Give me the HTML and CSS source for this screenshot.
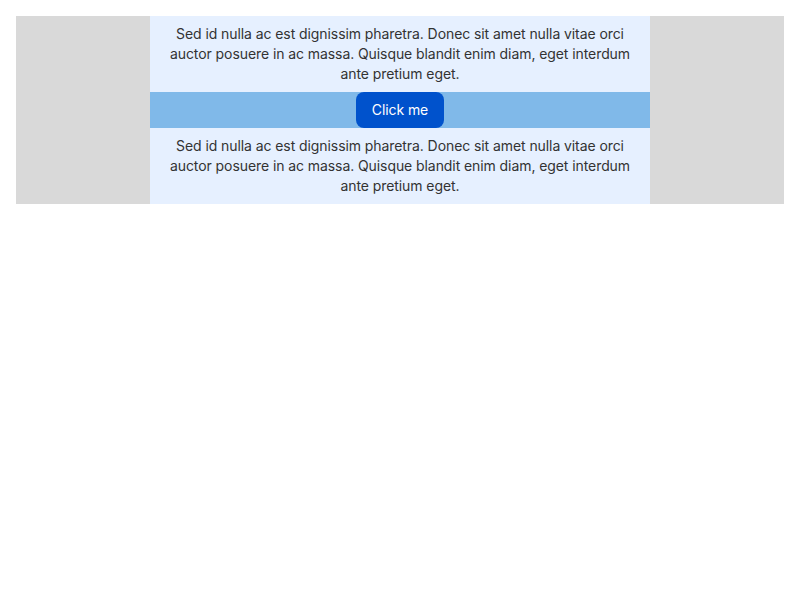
FILE: index.html
```html
<!DOCTYPE html>
<html>
<head>
<meta charset="utf-8">
<link rel="stylesheet" href="styles.css">
</head>
<body>
<div class="outer">
  <div class="column">
    <p class="text">Sed id nulla ac est dignissim pharetra. Donec sit amet nulla vitae orci auctor posuere in ac massa. Quisque blandit enim diam, eget interdum ante pretium eget.</p>
    <div class="bar"><button class="btn">Click me</button></div>
    <p class="text">Sed id nulla ac est dignissim pharetra. Donec sit amet nulla vitae orci auctor posuere in ac massa. Quisque blandit enim diam, eget interdum ante pretium eget.</p>
  </div>
</div>
</body>
</html>
```
FILE: styles.css
```css
html, body { margin: 0; padding: 0; background: #fff; }
body { padding: 16px; font-family: "Inter", sans-serif; }
.outer {
  background: #d9d9d9;
  display: flex;
  justify-content: center;
}
.column {
  width: 500px;
  background: #e6f0ff;
  display: flex;
  flex-direction: column;
}
.text {
  margin: 0;
  padding: 8px 16px;
  font-size: 14px;
  line-height: 20px;
  color: #333333;
  text-align: center;
  letter-spacing: -0.08px;
}
.bar {
  background: #80b9e9;
  display: flex;
  justify-content: center;
}
.btn {
  height: 36px;
  width: 88px;
  border: none;
  border-radius: 8px;
  background: #0052cc;
  color: #fff;
  font-family: "Inter", sans-serif;
  font-size: 14px;
  line-height: 20px;
  padding: 0 0 1px;
  letter-spacing: -0.08px;
  cursor: pointer;
}
```
